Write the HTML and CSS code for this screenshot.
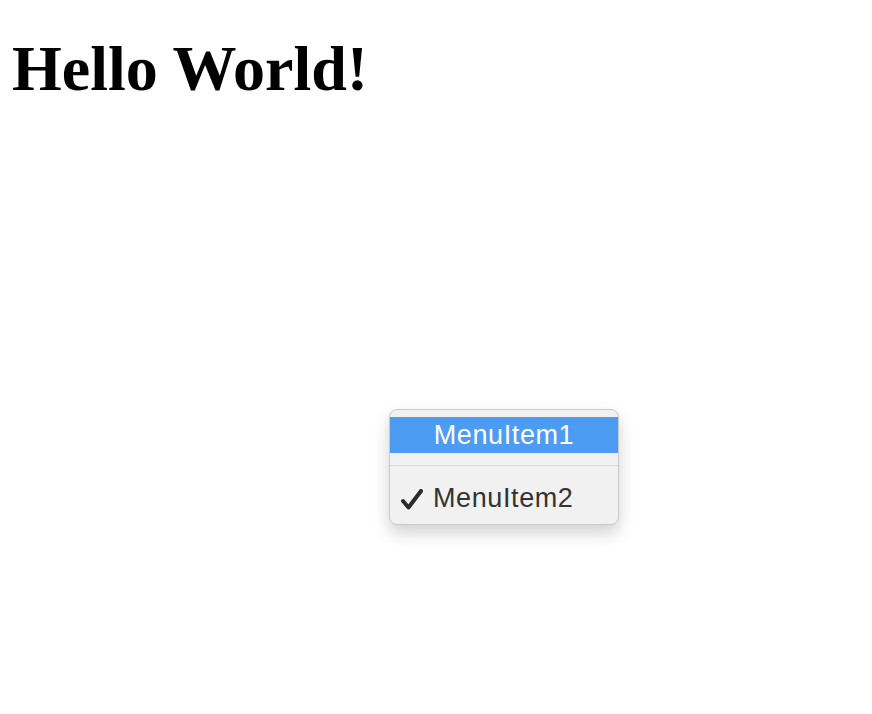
FILE: index.html
```html
<!DOCTYPE html>
<html lang="en">
<head>
  <meta charset="UTF-8">
  <title>Hello World</title>
  <link rel="stylesheet" href="styles.css">
</head>
<body>

<h1>Hello World!</h1>

<div class="menu">
  <div class="menu-item selected">MenuItem1</div>
  <div class="separator"></div>
  <div class="menu-item checked">
    <svg class="check" width="22" height="21" viewBox="0 0 22 21">
      <path d="M2 12 L7.5 18.5 L20 2" fill="none" stroke="#2b2b2b" stroke-width="4" stroke-linecap="round" stroke-linejoin="round"/>
    </svg>
    <span>MenuItem2</span>
  </div>
</div>

</body>
</html>
```

FILE: styles.css
```css
* {
  box-sizing: border-box;
  margin: 0;
  padding: 0;
}

body {
  background-color: #fff;
  font-family: 'Liberation Serif', serif;
  min-height: 100vh;
}

h1 {
  font-size: 64px;
  font-weight: bold;
  line-height: 64px;
  margin: 37px 0 0 12px;
  color: #000;
}

.menu {
  position: absolute;
  left: 389px;
  top: 409px;
  width: 230px;
  padding: 7px 0 8px;
  background-color: #f1f1f1;
  border: 1px solid #c9c9c9;
  border-radius: 8px;
  box-shadow: 0 8px 16px rgba(0, 0, 0, 0.18);
  font-family: 'Liberation Sans', sans-serif;
}

.menu-item {
  height: 36px;
  line-height: 36px;
  font-size: 27px;
  letter-spacing: 0.6px;
  color: #333;
}

.selected {
  background-color: #4d9cf4;
  color: #fff;
  text-align: center;
}

.separator {
  height: 1px;
  margin: 12px 0 14px;
  background-color: #dadada;
}

.checked {
  display: flex;
  align-items: center;
  padding-left: 11px;
}

.check {
  margin-right: 10px;
  margin-top: 2px;
}
```
